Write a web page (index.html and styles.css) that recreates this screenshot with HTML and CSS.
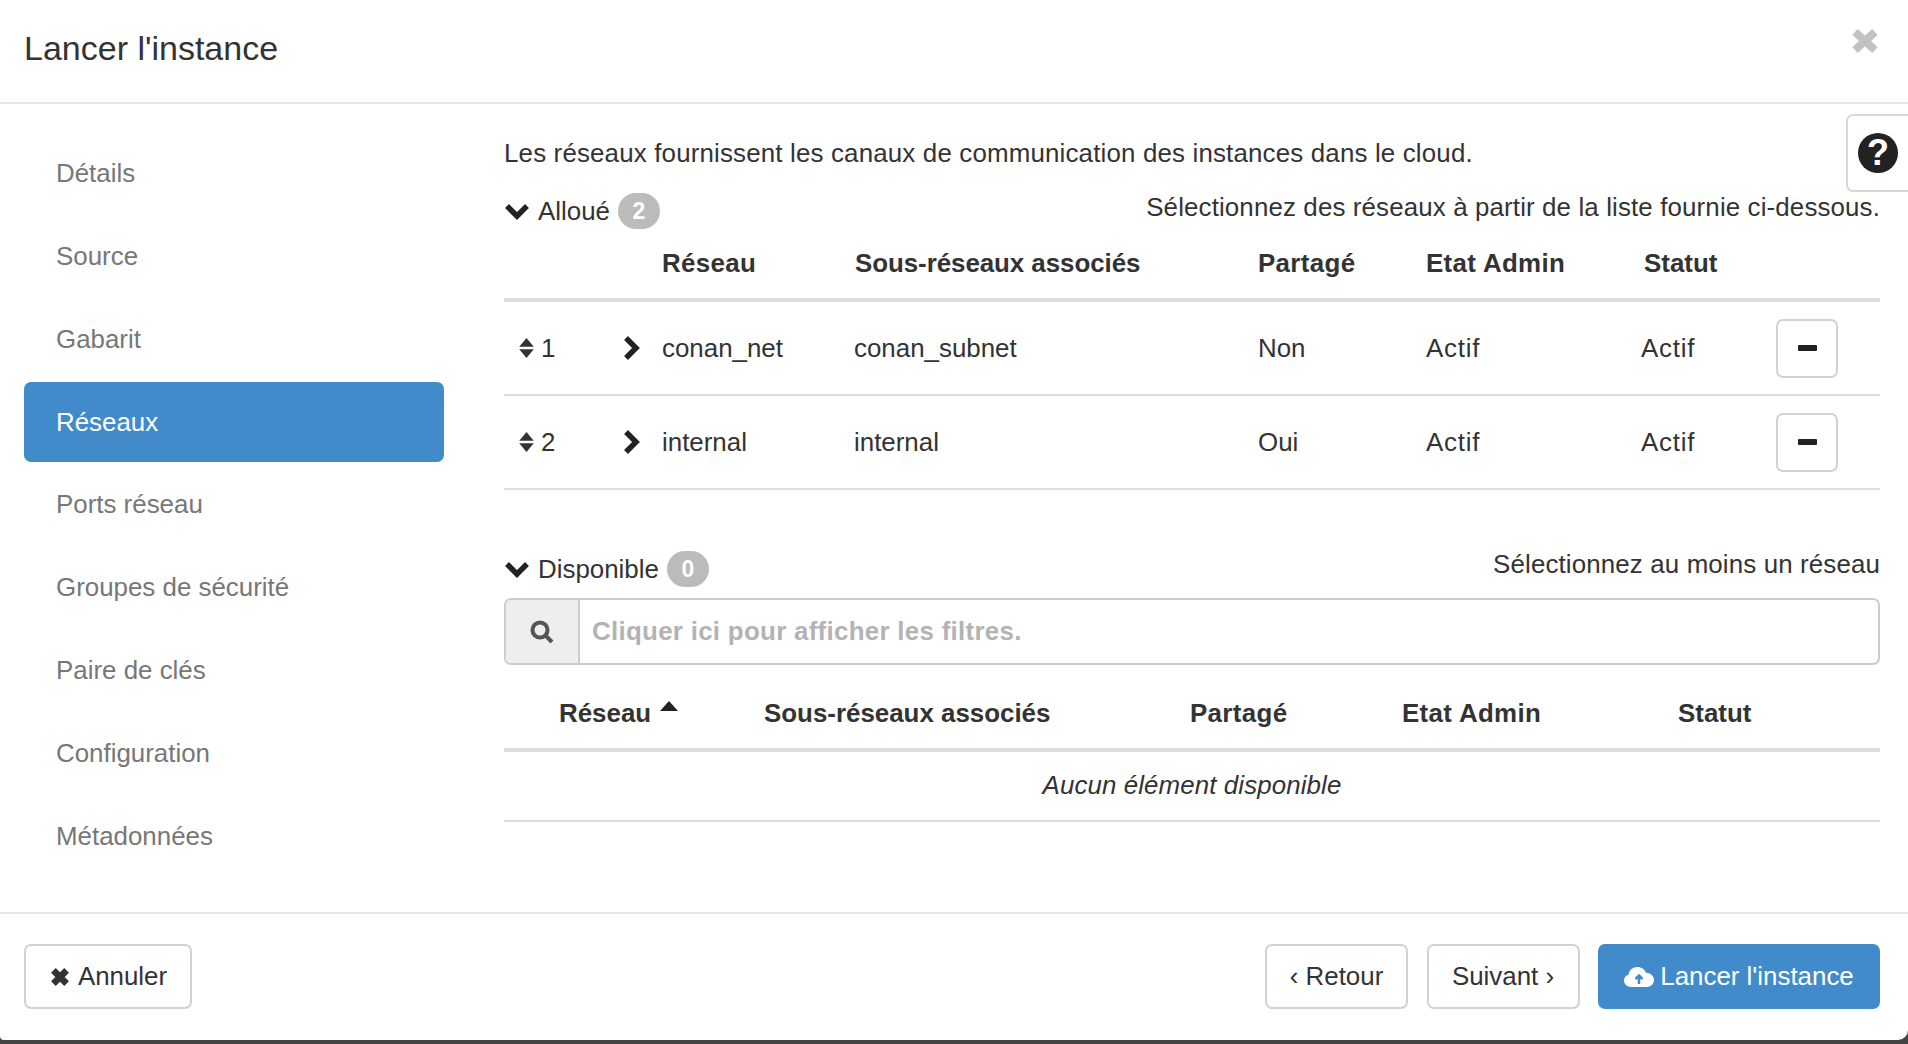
FILE: index.html
```html
<!DOCTYPE html>
<html lang="fr">
<head>
<meta charset="utf-8">
<title>Lancer l'instance</title>
<link rel="stylesheet" href="styles.css">
</head>
<body>
<div class="modal">
  <header class="modal-header">
    <h1 class="modal-title">Lancer l'instance</h1>
    <svg class="close-icon" viewBox="0 0 28 26"><path d="M4 4 L24 22 M24 4 L4 22"/></svg>
  </header>
  <div class="modal-body">
    <nav class="steps">
      <a class="step">Détails</a>
      <a class="step">Source</a>
      <a class="step">Gabarit</a>
      <a class="step active">Réseaux</a>
      <a class="step">Ports réseau</a>
      <a class="step">Groupes de sécurité</a>
      <a class="step">Paire de clés</a>
      <a class="step">Configuration</a>
      <a class="step">Métadonnées</a>
    </nav>
    <main class="content">
      <div class="help-tab"><span class="help-circle">?</span></div>
      <p class="intro">Les réseaux fournissent les canaux de communication des instances dans le cloud.</p>

      <div class="section-head">
        <div class="section-title">
          <svg class="chev-down" viewBox="0 0 26 18"><path d="M3 4 L13 14 L23 4"/></svg>
          <span>Alloué</span><span class="badge">2</span>
        </div>
        <div class="section-hint">Sélectionnez des réseaux à partir de la liste fournie ci-dessous.</div>
      </div>

      <table class="net-table allocated">
        <colgroup>
          <col class="a1"><col class="a2"><col class="a3"><col class="a4"><col class="a5"><col class="a6"><col class="a7"><col class="a8">
        </colgroup>
        <thead>
          <tr>
            <th></th><th></th><th class="wide">Réseau</th><th class="nudge">Sous-réseaux associés</th><th class="wide">Partagé</th><th class="wide">Etat Admin</th><th class="nudge-more">Statut</th><th></th>
          </tr>
        </thead>
        <tbody>
          <tr>
            <td class="order"><svg class="sort-icon" viewBox="0 0 16 22"><path d="M8 0 L16 9.500 H0 Z M8 22 L16 12.500 H0 Z"/></svg><span>1</span></td>
            <td><svg class="chev-right" viewBox="0 0 18 26"><path d="M4 3 L14 13 L4 23"/></svg></td>
            <td>conan_net</td><td>conan_subnet</td><td>Non</td><td class="actif">Actif</td><td class="actif">Actif</td>
            <td><button class="btn btn-minus"><span class="minus-bar"></span></button></td>
          </tr>
          <tr>
            <td class="order"><svg class="sort-icon" viewBox="0 0 16 22"><path d="M8 0 L16 9.500 H0 Z M8 22 L16 12.500 H0 Z"/></svg><span>2</span></td>
            <td><svg class="chev-right" viewBox="0 0 18 26"><path d="M4 3 L14 13 L4 23"/></svg></td>
            <td>internal</td><td>internal</td><td>Oui</td><td class="actif">Actif</td><td class="actif">Actif</td>
            <td><button class="btn btn-minus"><span class="minus-bar"></span></button></td>
          </tr>
        </tbody>
      </table>

      <div class="section-head available-head">
        <div class="section-title">
          <svg class="chev-down" viewBox="0 0 26 18"><path d="M3 4 L13 14 L23 4"/></svg>
          <span>Disponible</span><span class="badge">0</span>
        </div>
        <div class="section-hint">Sélectionnez au moins un réseau</div>
      </div>

      <div class="search">
        <div class="search-addon">
          <svg class="search-icon" viewBox="0 0 26 26"><circle cx="11" cy="11" r="7.5"/><path d="M16.5 16.5 L23 23"/></svg>
        </div>
        <div class="search-input">Cliquer ici pour afficher les filtres.</div>
      </div>

      <table class="net-table available">
        <colgroup>
          <col class="b1"><col class="b2"><col class="b3"><col class="b4"><col class="b5">
        </colgroup>
        <thead>
          <tr>
            <th class="first">Réseau <svg class="sort-up" viewBox="0 0 18 10"><path d="M9 0 L18 10 H0 Z"/></svg></th>
            <th>Sous-réseaux associés</th><th class="wide">Partagé</th><th class="wide">Etat Admin</th><th>Statut</th>
          </tr>
        </thead>
        <tbody>
          <tr><td class="empty" colspan="5">Aucun élément disponible</td></tr>
        </tbody>
      </table>
    </main>
  </div>
  <footer class="modal-footer">
    <button class="btn btn-action btn-cancel"><svg class="times-icon" viewBox="0 0 20 20"><path d="M4 4 L16 16 M16 4 L4 16"/></svg>Annuler</button>
    <div class="footer-right">
      <button class="btn btn-action btn-back">‹ Retour</button>
      <button class="btn btn-action btn-next">Suivant ›</button>
      <button class="btn btn-action btn-primary"><svg class="cloud-icon" viewBox="0 0 30 22"><path class="cloud" d="M7 21 C3 21 0 18 0 14.500 C0 11.500 2 9.500 4.500 8.700 C5 4 9 1 13.500 1 C17.500 1 20.500 3.300 22 6.700 C26.500 6.700 30 10 30 14 C30 18 26.800 21 22.500 21 Z"/><path class="arrow" d="M15 18 V10 M11.500 13 L15 9.500 L18.500 13"/></svg>Lancer l'instance</button>
    </div>
  </footer>
</div>
</body>
</html>
```

FILE: styles.css
```css
* { box-sizing: border-box; }
html, body { margin: 0; height: 100%; }
body {
  background: #454545;
  font-family: "Liberation Sans", Arial, sans-serif;
  font-size: 25.9px;
  color: #333;
  overflow: hidden;
}
.modal {
  height: 1040px;
  background: #fff;
  border-radius: 0 0 10px 4px;
  display: flex;
  flex-direction: column;
}
.modal-header {
  height: 104px;
  border-bottom: 2px solid #e5e5e5;
  padding: 0 29px 0 24px;
  display: flex;
  justify-content: space-between;
  align-items: flex-start;
  flex: none;
}
.modal-title {
  margin: 28px 0 0;
  font-size: 34px;
  line-height: 40px;
  font-weight: 400;
}
.close-icon { width: 28px; height: 26px; margin-top: 28px; }
.close-icon path { fill: none; stroke: #c2c2c2; stroke-width: 8; }

.modal-body { flex: 1; display: flex; min-height: 0; }
.steps {
  flex: none;
  width: 420px;
  margin: 29px 0 0 24px;
  display: flex;
  flex-direction: column;
  gap: 2.85px;
}
.step {
  height: 80px;
  line-height: 80px;
  padding-left: 32px;
  color: #777;
  border-radius: 7px;
}
.step.active { background: #428bca; color: #fff; }

.content {
  position: relative;
  flex: 1;
  min-width: 0;
  margin: 0 28px 0 60px;
  padding-top: 30px;
}
.help-tab {
  position: absolute;
  top: 10px;
  right: -28px;
  width: 62px;
  height: 78px;
  border: 2px solid #d8d8d8;
  border-right: 0;
  border-radius: 7px 0 0 7px;
  background: #fff;
  display: flex;
  align-items: center;
  padding-left: 10px;
}
.help-circle {
  width: 40px;
  height: 40px;
  border-radius: 50%;
  background: #222;
  color: #fff;
  font-weight: 700;
  font-size: 36px;
  line-height: 40px;
  text-align: center;
}
.intro { margin: 0 0 20px; line-height: 38px; letter-spacing: .165px; }

.section-head {
  height: 38px;
  display: flex;
  justify-content: space-between;
  align-items: flex-start;
}
.available-head { margin-top: 59px; height: 49px; }
.available-head .section-title { margin-top: 1px; }
.section-title { display: flex; align-items: center; height: 38px; }
.section-hint { line-height: 30px; letter-spacing: .13px; }
.chev-down { width: 26px; height: 18px; margin-right: 8px; }
.chev-down path, .chev-right path { fill: none; stroke: #222; stroke-width: 5.500; }
.badge {
  margin-left: 8px;
  width: 42px;
  height: 36px;
  border-radius: 18px;
  background: #bbb;
  color: #fff;
  font-weight: 700;
  font-size: 23px;
  line-height: 36px;
  text-align: center;
}

.net-table {
  width: 100%;
  table-layout: fixed;
  border-collapse: separate;
  border-spacing: 0;
}
.net-table th {
  text-align: left;
  font-weight: 700;
  padding: 0;
  border-bottom: 4px solid #ddd;
}
.net-table td { padding: 0; border-bottom: 2px solid #ddd; }
.net-table th.wide { letter-spacing: .35px; }
.allocated th { height: 72px; padding-bottom: 2px; }
.allocated td { height: 94px; }
.allocated th.nudge { padding-left: 1px; letter-spacing: -.05px; }
.allocated th.nudge-more { padding-left: 3px; }
.allocated td.actif { letter-spacing: .8px; }
.a1 { width: 103px; }
.a2 { width: 55px; }
.a3 { width: 192px; }
.a4 { width: 404px; }
.a5 { width: 168px; }
.a6 { width: 215px; }
.a7 { width: 135px; }
.a8 { width: 104px; }
.order { padding-left: 15px !important; }
.order span { margin-left: 7px; }
.sort-icon { width: 15px; height: 20px; vertical-align: -1px; }
.sort-icon path { fill: #333; }
.chev-right { width: 18px; height: 26px; margin: -4px 0 0 15px; vertical-align: middle; }

.btn {
  font: inherit;
  color: #333;
  background: #fff;
  border: 2px solid #d2d2d2;
  border-radius: 7px;
}
.btn-minus {
  width: 62px;
  height: 59px;
  padding: 0;
  display: flex;
  align-items: center;
  justify-content: center;
}
.minus-bar { width: 19px; height: 6px; background: #222; border-radius: 1px; }

.search {
  height: 67px;
  display: flex;
  border: 2px solid #ccc;
  border-radius: 7px;
  overflow: hidden;
}
.search-addon {
  width: 74px;
  flex: none;
  background: #eee;
  border-right: 2px solid #ccc;
  display: flex;
  align-items: center;
  justify-content: center;
}
.search-icon { width: 26px; height: 26px; }
.search-icon circle, .search-icon path { fill: none; stroke: #555; stroke-width: 4; }
.search-input {
  flex: 1;
  padding-left: 12px;
  line-height: 63px;
  color: #b3b3b3;
  font-weight: 700;
  letter-spacing: .29px;
}

.available th { height: 87px; padding-top: 14px; }
.available th.first { padding-left: 55px; }
.available td { height: 70px; padding-bottom: 2px; }
.b1 { width: 260px; }
.b2 { width: 426px; }
.b3 { width: 212px; }
.b4 { width: 276px; }
.b5 { width: 202px; }
.sort-up { width: 18px; height: 10px; margin-left: 2px; vertical-align: 11px; }
.sort-up path { fill: #222; }
.empty { text-align: center; font-style: italic; letter-spacing: .1px; }

.modal-footer {
  flex: none;
  height: 128px;
  border-top: 2px solid #e5e5e5;
  padding: 30px 28px 0 24px;
  display: flex;
  justify-content: space-between;
  align-items: flex-start;
}
.footer-right { display: flex; gap: 18.5px; }
.btn-action {
  height: 65px;
  padding: 0;
  display: flex;
  align-items: center;
  justify-content: center;
}
.btn-cancel { width: 168px; }
.btn-back { width: 143px; }
.btn-next { width: 153px; }
.btn-primary { width: 282px; background: #428bca; border-color: #428bca; color: #fff; }
.times-icon { width: 22px; height: 22px; margin-right: 7px; }
.times-icon path { fill: none; stroke: #333; stroke-width: 6; }
.cloud-icon { width: 30px; height: 22px; margin-right: 6px; }
.cloud { fill: #fff; }
.arrow { fill: none; stroke: #428bca; stroke-width: 2.500; }
```
